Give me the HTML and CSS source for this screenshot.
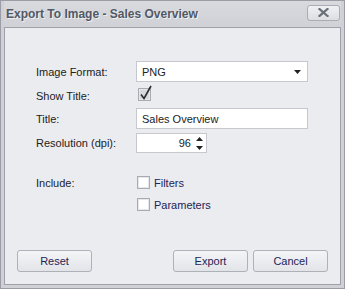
FILE: index.html
```html
<!DOCTYPE html>
<html lang="en">
<head>
  <meta charset="UTF-8">
  <title>Export To Image - Sales Overview</title>
  <link rel="stylesheet" href="styles.css">
</head>
<body>
  <div class="window">
    <div class="titlebar">
      <span class="caption">Export To Image - Sales Overview</span>
      <button class="close-btn" aria-label="Close">
        <svg width="11" height="9" viewBox="0 0 11 9">
          <path d="M1.5 1 L9.5 8 M9.5 1 L1.5 8" stroke="#6b6f78" stroke-width="2.2" stroke-linecap="square"/>
        </svg>
      </button>
    </div>
    <div class="panel">
      <div class="form">
        <label class="lbl">Image Format:</label>
        <div class="combo">
          <span>PNG</span>
          <svg width="7" height="4" viewBox="0 0 7 4"><path d="M0 0 H7 L3.5 4 Z" fill="#222"/></svg>
        </div>

        <label class="lbl">Show Title:</label>
        <div class="check-cell">
          <span class="check checked">
            <svg width="14" height="16" viewBox="0 0 14 16"><path d="M2 9.5 L5 13.5 L12 1" fill="none" stroke="#2b2b2b" stroke-width="1.6"/></svg>
          </span>
        </div>

        <label class="lbl">Title:</label>
        <div class="textbox">Sales Overview</div>

        <label class="lbl">Resolution (dpi):</label>
        <div class="spin">
          <span class="spin-val">96</span>
          <span class="spin-arrows">
            <svg width="7" height="4" viewBox="0 0 7 4"><path d="M0 4 H7 L3.5 0 Z" fill="#222"/></svg>
            <svg width="7" height="4" viewBox="0 0 7 4"><path d="M0 0 H7 L3.5 4 Z" fill="#222"/></svg>
          </span>
        </div>
      </div>

      <div class="include">
        <label class="lbl">Include:</label>
        <div class="opts">
          <div class="opt"><span class="check"></span><span>Filters</span></div>
          <div class="opt"><span class="check"></span><span>Parameters</span></div>
        </div>
      </div>

      <div class="buttons">
        <button class="btn">Reset</button>
        <div class="right">
          <button class="btn">Export</button>
          <button class="btn">Cancel</button>
        </div>
      </div>
    </div>
  </div>
</body>
</html>
```

FILE: styles.css
```css
body {
  margin: 0;
  font-family: "Liberation Sans", Arial, sans-serif;
  font-size: 11px;
  color: #222;
}
.window {
  width: 345px;
  height: 289px;
  box-sizing: border-box;
  border: 1px solid #9a9da6;
  background: #cfd1d6;
  padding: 0 3px 3px 3px;
  display: flex;
  flex-direction: column;
}
.titlebar {
  height: 26px;
  display: flex;
  align-items: center;
  justify-content: space-between;
  padding: 0 1px 0 2px;
  background: linear-gradient(#d8dade, #cfd1d6);
}
.caption {
  font-size: 12px;
  font-weight: bold;
  color: #525865;
  text-shadow: 1px 1px 0 #eef0f3;
}
.close-btn {
  width: 33px;
  height: 16px;
  margin-top: -3px;
  border: 1px solid #a9acb3;
  border-radius: 3px;
  background: linear-gradient(#f0f1f3, #dcdee2);
  display: flex;
  align-items: center;
  justify-content: center;
  padding: 0;
}
.panel {
  flex: 1;
  background: #ebecf0;
  border: 1px solid #9ea1a9;
  padding: 33px 0 0 31px;
  display: flex;
  flex-direction: column;
}
.form {
  display: grid;
  grid-template-columns: 100px 172px;
  row-gap: 4px;
  align-items: center;
}
.combo, .textbox {
  height: 21px;
  box-sizing: border-box;
  background: #fff;
  border: 1px solid #c6c8ce;
  display: flex;
  align-items: center;
  padding: 0 6px 0 5px;
}
.combo {
  justify-content: space-between;
  margin-bottom: 1px;
}
.check-cell {
  height: 17px;
  display: flex;
  align-items: flex-start;
}
.check {
  width: 13px;
  height: 13px;
  box-sizing: border-box;
  border: 1px solid #a8abb2;
  background: #fff;
  box-shadow: inset 0 0 0 1px #e6e7ea;
  display: inline-block;
  position: relative;
}
.check.checked {
  background: #d6d8dc;
  margin: 1px 0 0 2px;
}
.check.checked svg {
  position: absolute;
  left: 0;
  top: -4px;
}
.spin {
  width: 71px;
  height: 20px;
  box-sizing: border-box;
  background: #fff;
  border: 1px solid #c6c8ce;
  display: flex;
  align-items: center;
  justify-content: flex-end;
  padding-right: 3px;
}
.spin-val {
  margin-right: 5px;
}
.spin-arrows {
  display: flex;
  flex-direction: column;
  gap: 5px;
}
.spin-arrows svg {
  display: block;
}
.include {
  display: grid;
  grid-template-columns: 101px auto;
  margin-top: 23px;
}
.include .lbl {
  padding-top: 1px;
}
.opts {
  display: flex;
  flex-direction: column;
  gap: 9px;
}
.opt {
  display: flex;
  align-items: center;
  gap: 4px;
  color: #232355;
}
.buttons {
  margin-top: auto;
  margin-bottom: 12px;
  margin-left: -19px;
  margin-right: 12px;
  display: flex;
  justify-content: space-between;
}
.right {
  display: flex;
  gap: 5px;
}
.btn {
  width: 75px;
  height: 22px;
  border: 1px solid #aeb1b8;
  border-radius: 3px;
  background: linear-gradient(#f4f5f7, #e3e4e8);
  font-family: "Liberation Sans", Arial, sans-serif;
  font-size: 11px;
  color: #232355;
  padding: 0;
}
```
